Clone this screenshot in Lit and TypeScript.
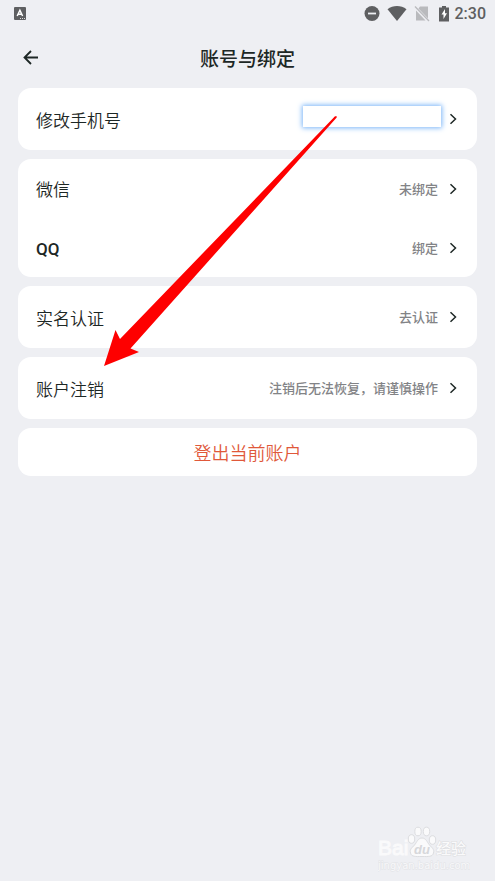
import { LitElement, html, css, svg, nothing } from "lit";
import { customElement, property } from "lit/decorators.js";

interface Entry {
  label: string;
  note?: string;
  masked?: boolean;
}

const GROUPS: Entry[][] = [
  [{ label: "修改手机号", masked: true }],
  [
    { label: "微信", note: "未绑定" },
    { label: "QQ", note: "绑定" },
  ],
  [{ label: "实名认证", note: "去认证" }],
  [{ label: "账户注销", note: "注销后无法恢复，请谨慎操作" }],
];

@customElement("status-bar")
class StatusBar extends LitElement {
  static styles = css`
    :host {
      display: flex;
      align-items: center;
      height: 28px;
      padding: 0 9px 0 14px;
      color: #5e5f61;
      font: 500 16px/20px Roboto, sans-serif;
    }
    .spacer {
      flex: 1;
    }
    .icons {
      display: flex;
      align-items: center;
      gap: 7px;
      margin-right: 4px;
    }
    svg {
      display: block;
    }
  `;

  render() {
    return html`
      <svg width="12" height="14" viewBox="0 0 12 14" aria-hidden="true">
        <rect width="12" height="13" rx="1" fill="#5e5f61" />
        <path d="M3.2 9 5.9 3.2 8.6 9M4.2 7.2h3.4" fill="none" stroke="#fff" stroke-width="1.5" />
        <path d="M6 11.5h1M8 11.5h1M10 11.5h1" stroke="#ddd" />
      </svg>
      <span class="spacer"></span>
      <span class="icons">
        <svg width="16" height="16" viewBox="0 0 16 16" aria-hidden="true">
          <circle cx="8" cy="7.500" r="7.500" fill="#5e5f61" />
          <path d="M4 7.500h8" stroke="#eeeff3" stroke-width="1.800" />
        </svg>
        <svg width="20" height="16" viewBox="0 0 20 16" aria-hidden="true">
          <path d="M.5 3.3C6-1 14-1 19.500 3.300L10 15Z" fill="#5e5f61" />
        </svg>
        <svg width="16" height="16" viewBox="0 0 16 16" aria-hidden="true">
          <path d="M6 .5h8v12L4.500 2.500zM2 4.500 11.500 14.500H2z" fill="#b9babd" />
          <path d="M1 .5 15 15" stroke="#b9babd" stroke-width="1.300" />
        </svg>
        <svg width="14" height="16" viewBox="0 0 14 16" aria-hidden="true">
          <path d="M5 0h4v1.500h3v14H2v-14h3z" fill="#5e5f61" />
          <path d="M8 3 4.500 8.500h2V13L10 7.300H8z" fill="#fff" />
        </svg>
      </span>
      <time>2:30</time>
    `;
  }
}

@customElement("setting-row")
class SettingRow extends LitElement {
  @property({ attribute: false }) entry!: Entry;

  static styles = css`
    :host {
      display: flex;
      flex: 1;
    }
    button {
      flex: 1;
      display: flex;
      align-items: center;
      padding: 0 20px 0 18px;
      border: 0;
      background: none;
      color: #1d2725;
      font: 350 17px/26px Roboto, "Noto Sans CJK SC", sans-serif;
      text-align: left;
      cursor: pointer;
    }
    .label {
      flex: 1;
      padding-top: 3px;
    }
    .latin {
      font-weight: 500;
    }
    .note {
      padding-top: 2px;
      color: #828386;
      font-size: 13px;
      font-weight: 500;
      line-height: 20px;
    }
    .mask {
      width: 138px;
      height: 21px;
      margin: 0 -3px 5px 0;
      background: #fff;
      box-shadow: 0 0 5px 1px #7ab5f8;
    }
    svg {
      display: block;
      margin-left: 11px;
    }
  `;

  render() {
    const { label, note, masked } = this.entry;
    return html`
      <button type="button">
        <span class=${/^[A-Z]+$/.test(label) ? "label latin" : "label"}>${label}</span>
        ${masked ? html`<span class="mask"></span>` : nothing}
        ${note ? html`<span class="note">${note}</span>` : nothing}
        <svg width="8" height="12" viewBox="0 0 8 12" aria-hidden="true">
          <path d="M1.500 1.200 6.500 6l-5 4.800" fill="none" stroke="#1d2725" stroke-width="1.500" />
        </svg>
      </button>
    `;
  }
}

@customElement("baidu-mark")
class BaiduMark extends LitElement {
  static styles = css`
    :host {
      display: block;
    }
    svg {
      display: block;
    }
    text {
      paint-order: stroke;
      stroke: #dcdde0;
      stroke-width: 1px;
      fill: #fafafb;
    }
    .brand {
      font: 400 21px "Liberation Sans", sans-serif;
      stroke: #fafafb;
    }
    .du {
      font: italic 700 13px "Liberation Sans", sans-serif;
      fill: #d6d7da;
      stroke: none;
    }
    .cjk {
      font: 500 15px "Noto Sans CJK SC", sans-serif;
    }
    .site {
      font: 400 10px "DejaVu Sans", sans-serif;
      fill: #f8f8fa;
      stroke: #e2e3e6;
    }
  `;

  render() {
    const toes = [
      [33.5, 14],
      [40, 6.5],
      [48.5, 6.5],
      [54.5, 15],
    ];
    return html`
      <svg width="92" height="48" viewBox="0 0 92 48" role="img" aria-label="Baidu 经验">
        <g fill="#fafafb" stroke="#dcdde0">
          ${toes.map(([x, y]) => svg`<ellipse cx=${x} cy=${y} rx="3.2" ry="4.3" />`)}
          <path d="M44 13c4 0 5 4 7.500 7s5 4 4 8-5 3.500-11.500 3.500S33.500 32 32.500 28s1.500-5 4-8 3.500-7 7.500-7z" />
        </g>
        <text class="brand" x="0" y="30">Bai</text>
        <text class="du" x="36" y="29">du</text>
        <text class="cjk" x="58" y="29">经验</text>
        <text class="site" x="0" y="44">jingyan.baidu.com</text>
      </svg>
    `;
  }
}

@customElement("app-root")
class AppRoot extends LitElement {
  static styles = css`
    :host {
      display: flex;
      flex-direction: column;
      position: relative;
      min-height: 100vh;
      background: #eeeff3;
      color: #1d2725;
      font: 350 18px/26px Roboto, "Noto Sans CJK SC", sans-serif;
    }
    header {
      display: grid;
      grid-template-columns: 28px 1fr 28px;
      align-items: center;
      height: 60px;
      padding: 0 17px;
    }
    .back {
      display: flex;
      justify-content: center;
      height: 28px;
      align-items: center;
      padding: 0;
      border: 0;
      background: none;
      cursor: pointer;
    }
    h1 {
      margin: 0;
      padding-top: 4px;
      font-size: 19px;
      font-weight: 500;
      text-align: center;
    }
    main {
      flex: 1;
      display: flex;
      flex-direction: column;
      gap: 9px;
      padding: 0 18px;
    }
    .card {
      display: flex;
      flex-direction: column;
      border-radius: 13px;
      background: #fff;
    }
    .card setting-row {
      min-height: 59px;
    }
    .card setting-row:only-child {
      min-height: 62px;
    }
    .logout {
      height: 48px;
      padding: 3px 0 0;
      border: 0;
      border-radius: 13px;
      background: #fff;
      color: #e0583a;
      font: inherit;
      cursor: pointer;
    }
    footer {
      display: flex;
      justify-content: flex-end;
      padding: 0 25px 8px 0;
    }
    .pointer {
      position: absolute;
      top: 116px;
      right: 158px;
      pointer-events: none;
    }
  `;

  render() {
    return html`
      <status-bar></status-bar>
      <header>
        <button class="back" type="button" aria-label="返回">
          <svg width="16" height="16" viewBox="0 0 16 16" aria-hidden="true">
            <path d="M15 7.500H1.500M8 1 1.500 7.500 8 14" fill="none" stroke="#1d2725" stroke-width="1.800" />
          </svg>
        </button>
        <h1>账号与绑定</h1>
      </header>
      <main>
        ${GROUPS.map(
          (group) => html`
            <section class="card">
              ${group.map((entry) => html`<setting-row .entry=${entry}></setting-row>`)}
            </section>
          `
        )}
        <button class="logout" type="button">登出当前账户</button>
      </main>
      <footer><baidu-mark></baidu-mark></footer>
      <svg class="pointer" width="233" height="250" viewBox="0 0 233 250" aria-hidden="true">
        <path d="M0 250 11.500 214 16 223 231 0.300 232.700 0.300 232.700 1.500 26.500 232.500 35 236z" fill="#fe0000" />
      </svg>
    `;
  }
}
